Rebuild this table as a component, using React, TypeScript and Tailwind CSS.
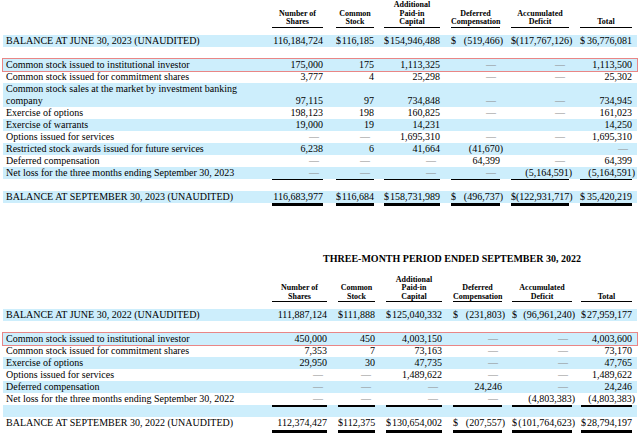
import React from "react";

const BLUE = "bg-[#cdeefc]";

const C1 = [
  "w-[51px]",
  "ml-[13px] w-[38px]",
  "ml-[10px] w-[56px]",
  "ml-[11px] w-[49px]",
  "ml-[11px] w-[58px]",
  "ml-[11px] w-[52px]",
];
const C2 = [
  "w-[55px]",
  "ml-[11px] w-[37px]",
  "ml-[11px] w-[56px]",
  "ml-[11px] w-[49px]",
  "ml-[10px] w-[60px]",
  "ml-[9px] w-[51px]",
];

function Num({ s }: { s: string }) {
  if (s === "—") return <span className="pr-[4px] text-[#8c8c8c]">—</span>;
  if (s.startsWith("(")) {
    return (
      <span>
        {s.slice(0, -1)}
        <span className="-mr-[3px]">)</span>
      </span>
    );
  }
  return <span>{s}</span>;
}

function ValueCell({ s, cls }: { s: string; cls: string }) {
  if (s.startsWith("$")) {
    const rest = s.slice(1).trim();
    return (
      <div className={`${cls} flex justify-between whitespace-nowrap`}>
        <span>$</span>
        <Num s={rest} />
      </div>
    );
  }
  return (
    <div className={`${cls} flex justify-end whitespace-nowrap`}>
      <Num s={s} />
    </div>
  );
}

type RowProps = {
  label: React.ReactNode;
  vals: string[];
  cols: string[];
  blue?: boolean;
  box?: boolean;
};

function Line({ label, vals, cols, blue, box }: RowProps) {
  return (
    <div
      className={`flex items-end leading-[12px] ${blue ? BLUE : "bg-white"} ${
        box ? "outline outline-[1.5px] outline-[#e98686]" : ""
      }`}
    >
      <div className="w-[269px] pl-[3px] whitespace-nowrap">{label}</div>
      {vals.map((v, i) => (
        <ValueCell key={i} s={v} cls={cols[i]} />
      ))}
    </div>
  );
}

function Blank({ blue }: { blue?: boolean }) {
  return <div className={`h-[12px] ${blue ? BLUE : "bg-white"}`} />;
}

function Rules({ cols, blue }: { cols: string[]; blue?: boolean }) {
  return (
    <div className={`flex h-[12px] items-start ${blue ? BLUE : "bg-white"}`}>
      <div className="w-[269px]" />
      {cols.map((c, i) => (
        <div key={i} className={`${c} h-[1.5px] bg-black`} />
      ))}
    </div>
  );
}

function Thick({ cols }: { cols: string[] }) {
  return (
    <div className="flex h-[4px] items-start">
      <div className="w-[269px]" />
      {cols.map((c, i) => (
        <div key={i} className={`${c} mt-[0.5px] h-[3px] bg-black`} />
      ))}
    </div>
  );
}

function HCell({ cls, lines }: { cls: string; lines: string[] }) {
  return (
    <div className={`${cls} flex flex-col justify-end border-b-[1.5px] border-black text-center`}>
      {lines.map((l, i) => (
        <div key={i} className="whitespace-nowrap">
          {l}
        </div>
      ))}
    </div>
  );
}

function Header({ cols }: { cols: string[] }) {
  const heads = [
    ["Number of", "Shares"],
    ["Common", "Stock"],
    ["Additional", "Paid-in", "Capital"],
    ["Deferred", "Compensation"],
    ["Accumulated", "Deficit"],
    ["Total"],
  ];
  return (
    <div className="flex items-stretch text-[8px] font-bold leading-[8.5px]">
      <div className="w-[269px]" />
      {heads.map((h, i) => (
        <HCell key={i} cls={cols[i]} lines={h} />
      ))}
    </div>
  );
}

export default function App() {
  return (
    <div className="h-[438px] w-[640px] overflow-hidden bg-white font-['Liberation_Serif',serif] text-[10px] text-black">
      <div className="ml-[3px] w-[634px]">
        {/* Section 2023 */}
        <div className="pt-[1px]">
          <Header cols={C1} />
          <div className="mt-[7px]">
            <Line
              cols={C1}
              blue
              label="BALANCE AT JUNE 30, 2023 (UNAUDITED)"
              vals={["116,184,724", "$116,185", "$154,946,488", "$ (519,466)", "$(117,767,126)", "$ 36,776,081"]}
            />
            <Blank />
            <Line
              cols={C1}
              blue
              box
              label="Common stock issued to institutional investor"
              vals={["175,000", "175", "1,113,325", "—", "—", "1,113,500"]}
            />
            <Line
              cols={C1}
              label="Common stock issued for commitment shares"
              vals={["3,777", "4", "25,298", "—", "—", "25,302"]}
            />
            <Line
              cols={C1}
              blue
              label={
                <>
                  Common stock sales at the market by investment banking
                  <br />
                  company
                </>
              }
              vals={["97,115", "97", "734,848", "—", "—", "734,945"]}
            />
            <Line
              cols={C1}
              label="Exercise of options"
              vals={["198,123", "198", "160,825", "—", "—", "161,023"]}
            />
            <Line
              cols={C1}
              blue
              label="Exercise of warrants"
              vals={["19,000", "19", "14,231", "", "", "14,250"]}
            />
            <Line
              cols={C1}
              label="Options issued for services"
              vals={["—", "—", "1,695,310", "—", "—", "1,695,310"]}
            />
            <Line
              cols={C1}
              blue
              label="Restricted stock awards issued for future services"
              vals={["6,238", "6", "41,664", "(41,670)", "", "—"]}
            />
            <Line
              cols={C1}
              label="Deferred compensation"
              vals={["—", "—", "—", "64,399", "—", "64,399"]}
            />
            <Line
              cols={C1}
              blue
              label="Net loss for the three months ending September 30, 2023"
              vals={["—", "—", "—", "—", "(5,164,591)", "(5,164,591)"]}
            />
            <Rules cols={C1} />
            <Line
              cols={C1}
              blue
              label="BALANCE AT SEPTEMBER 30, 2023 (UNAUDITED)"
              vals={["116,683,977", "$116,684", "$158,731,989", "$ (496,737)", "$(122,931,717)", "$ 35,420,219"]}
            />
            <Thick cols={C1} />
          </div>
        </div>

        {/* Section 2022 */}
        <div className="mt-[46px] flex">
          <div className="w-[269px]" />
          <div className="w-[360px] text-center text-[10px] font-bold leading-[12px]">
            THREE-MONTH PERIOD ENDED SEPTEMBER 30, 2022
          </div>
        </div>
        <div className="mt-[11px]">
          <Header cols={C2} />
          <div className="mt-[7px]">
            <Line
              cols={C2}
              blue
              label="BALANCE AT JUNE 30, 2022 (UNAUDITED)"
              vals={["111,887,124", "$111,888", "$125,040,332", "$ (231,803)", "$ (96,961,240)", "$27,959,177"]}
            />
            <Blank />
            <Line
              cols={C2}
              blue
              box
              label="Common stock issued to institutional investor"
              vals={["450,000", "450", "4,003,150", "—", "—", "4,003,600"]}
            />
            <Line
              cols={C2}
              label="Common stock issued for commitment shares"
              vals={["7,353", "7", "73,163", "—", "—", "73,170"]}
            />
            <Line
              cols={C2}
              blue
              label="Exercise of options"
              vals={["29,950", "30", "47,735", "—", "—", "47,765"]}
            />
            <Line
              cols={C2}
              label="Options issued for services"
              vals={["—", "—", "1,489,622", "—", "—", "1,489,622"]}
            />
            <Line
              cols={C2}
              blue
              label="Deferred compensation"
              vals={["—", "—", "—", "24,246", "—", "24,246"]}
            />
            <Line
              cols={C2}
              label="Net loss for the three months ending September 30, 2022"
              vals={["—", "—", "—", "—", "(4,803,383)", "(4,803,383)"]}
            />
            <Rules cols={C2} blue />
            <Line
              cols={C2}
              label="BALANCE AT SEPTEMBER 30, 2022 (UNAUDITED)"
              vals={["112,374,427", "$112,375", "$130,654,002", "$ (207,557)", "$(101,764,623)", "$28,794,197"]}
            />
            <Thick cols={C2} />
          </div>
        </div>
      </div>
    </div>
  );
}
